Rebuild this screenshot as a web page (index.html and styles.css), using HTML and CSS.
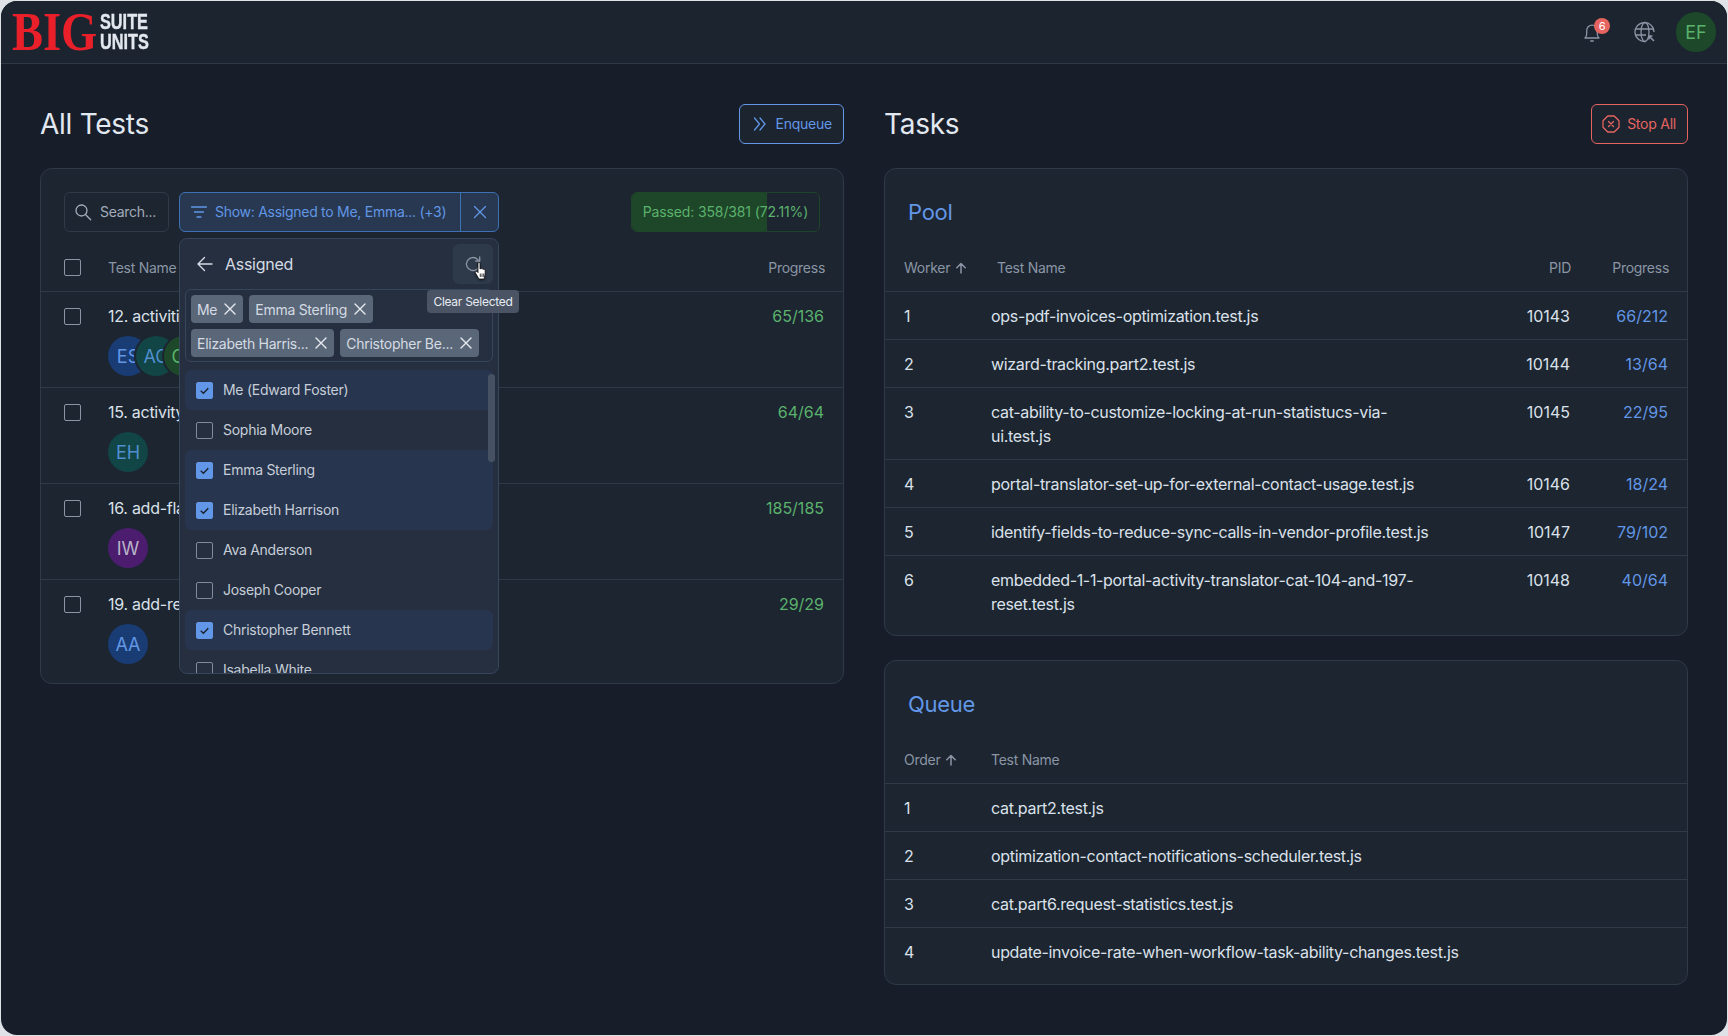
FILE: index.html
```html
<!DOCTYPE html>
<html lang="en">
<head>
<meta charset="utf-8">
<title>All Tests</title>
<link rel="stylesheet" href="styles.css">
</head>
<body>
<div class="app">
  <header class="topbar">
    <div class="logo"><span class="logo-big">BIG</span><span class="logo-small"><span>SUITE</span><span>UNITS</span></span></div>
    <div class="top-actions">
      <div class="bell">
        <svg width="20" height="20" viewBox="0 0 20 20" fill="none" stroke="#8b95a5" stroke-width="1.3" stroke-linecap="round" stroke-linejoin="round"><path d="M3 16h14c-1-.9-1.700-1.800-1.700-4V8.500a5.300 5.300 0 0 0-10.600 0V12c0 2.200-.7 3.100-1.700 4Z"/><path d="M8.700 19h2.600"/></svg>
        <span class="badge">6</span>
      </div>
      <svg class="globe" width="22" height="22" viewBox="0 0 22 22" fill="none" stroke="#8b95a5" stroke-width="1.300"><path d="M20 11a9.500 9.500 0 1 0-8 9.400"/><ellipse cx="11" cy="11" rx="4" ry="9.500"/><path d="M2 8h18M2 14h10"/><path d="M15 15l5 5M15 15v3.500M15 15h3.500" stroke-width="1.600"/></svg>
      <div class="avatar green me">EF</div>
    </div>
  </header>
  <main class="content">
    <section class="column">
      <div class="section-head">
        <h1>All Tests</h1>
        <button class="btn btn-blue"><svg width="16" height="16" viewBox="0 0 16 16" fill="none" stroke="currentColor" stroke-width="1.300" stroke-linecap="round" stroke-linejoin="round"><path d="M2.500 2l5 6-5 6M8 2l5 6-5 6"/></svg>Enqueue</button>
      </div>
      <div class="card tests-card">
        <div class="toolbar">
          <div class="search"><svg width="18" height="18" viewBox="0 0 18 18" fill="none" stroke="#a3acba" stroke-width="1.300" stroke-linecap="round"><circle cx="7.500" cy="7.500" r="5.500"/><path d="M11.700 11.700l5 5"/></svg>Search...</div>
          <div class="filter">
            <div class="filter-main"><svg width="18" height="18" viewBox="0 0 18 18" fill="none" stroke="currentColor" stroke-width="1.300" stroke-linecap="round"><path d="M1.500 4h15M4.500 9h9M7 14h4"/></svg>Show: Assigned to Me, Emma... (+3)</div>
            <div class="filter-clear"><svg width="14" height="14" viewBox="0 0 14 14" fill="none" stroke="currentColor" stroke-width="1.300" stroke-linecap="round"><path d="M1.500 1.500l11 11M12.500 1.500l-11 11"/></svg></div>
          </div>
          <div class="passed"><div class="passed-fill"></div><span>Passed: 358/381 (72.11%)</span></div>
        </div>
        <div class="tr thead">
          <span class="cb"></span><span class="t-name">Test Name</span><span class="t-progress">Progress</span>
        </div>
        <div class="tr test-row">
          <span class="cb"></span>
          <div class="t-name"><div class="t-title">12. activities-report.test.js</div><div class="avatars"><span class="avatar blue">ES</span><span class="avatar teal">AC</span><span class="avatar green">CB</span></div></div>
          <span class="t-progress ok">65/136</span>
        </div>
        <div class="tr test-row">
          <span class="cb"></span>
          <div class="t-name"><div class="t-title">15. activity-log.test.js</div><div class="avatars"><span class="avatar teal">EH</span></div></div>
          <span class="t-progress ok">64/64</span>
        </div>
        <div class="tr test-row">
          <span class="cb"></span>
          <div class="t-name"><div class="t-title">16. add-flags.test.js</div><div class="avatars"><span class="avatar purple">IW</span></div></div>
          <span class="t-progress ok">185/185</span>
        </div>
        <div class="tr test-row end">
          <span class="cb"></span>
          <div class="t-name"><div class="t-title">19. add-records.test.js</div><div class="avatars"><span class="avatar blue">AA</span></div></div>
          <span class="t-progress ok">29/29</span>
        </div>
        <div class="dropdown">
          <div class="dd-head">
            <svg width="18" height="18" viewBox="0 0 18 18" fill="none" stroke="#d5dbe4" stroke-width="1.400" stroke-linecap="round" stroke-linejoin="round"><path d="M16 9H2M8.500 2.500L2 9l6.500 6.500"/></svg>
            <span class="dd-title">Assigned</span>
            <div class="dd-reset">
              <svg width="18" height="18" viewBox="0 0 18 18" fill="none" stroke="#8b95a5" stroke-width="1.300" stroke-linecap="round" stroke-linejoin="round"><path d="M15.500 9a6.500 6.500 0 1 1-1.900-4.600L15.500 6"/><path d="M15.700 2v4h-4"/></svg>
              <svg class="hand" width="14" height="18" viewBox="0 0 14 18"><path d="M4 1.500c0-1.300 2-1.300 2 0V7l.5-.3c.5-.4 1.300-.2 1.500.3.500-.3 1.300-.2 1.500.4.600-.3 1.400-.1 1.600.6.100 2 .2 4.500-.3 6l-.8 3H5l-3.500-6C.8 9.800 2 8.800 3 9.600l1 1V1.500Z" fill="#fff" stroke="#111" stroke-width=".8"/><path d="M6.300 11.500v3.500M8 11.500v3.500M9.700 11.500v3.500" stroke="#111" stroke-width=".8"/></svg>
            </div>
          </div>
          <div class="chips">
            <span class="chip">Me<svg class="x" viewBox="0 0 12 12"><path d="M1 1l10 10M11 1L1 11"/></svg></span>
            <span class="chip">Emma Sterling<svg class="x" viewBox="0 0 12 12"><path d="M1 1l10 10M11 1L1 11"/></svg></span>
            <span class="chip">Elizabeth Harris...<svg class="x" viewBox="0 0 12 12"><path d="M1 1l10 10M11 1L1 11"/></svg></span>
            <span class="chip">Christopher Be...<svg class="x" viewBox="0 0 12 12"><path d="M1 1l10 10M11 1L1 11"/></svg></span>
          </div>
          <div class="dd-list">
            <div class="opt on first last"><span class="cb checked"><svg viewBox="0 0 18 18"><path d="M5 9.300l2.800 2.700L13 6.500"/></svg></span>Me (Edward Foster)</div>
            <div class="opt"><span class="cb"></span>Sophia Moore</div>
            <div class="opt on first"><span class="cb checked"><svg viewBox="0 0 18 18"><path d="M5 9.300l2.800 2.700L13 6.500"/></svg></span>Emma Sterling</div>
            <div class="opt on last"><span class="cb checked"><svg viewBox="0 0 18 18"><path d="M5 9.300l2.800 2.700L13 6.500"/></svg></span>Elizabeth Harrison</div>
            <div class="opt"><span class="cb"></span>Ava Anderson</div>
            <div class="opt"><span class="cb"></span>Joseph Cooper</div>
            <div class="opt on first last"><span class="cb checked"><svg viewBox="0 0 18 18"><path d="M5 9.300l2.800 2.700L13 6.500"/></svg></span>Christopher Bennett</div>
            <div class="opt"><span class="cb"></span>Isabella White</div>
          </div>
          <div class="scrollbar"></div>
        </div>
        <div class="tooltip">Clear Selected</div>
      </div>
    </section>
    <section class="column">
      <div class="section-head">
        <h1>Tasks</h1>
        <button class="btn btn-red"><svg width="18" height="18" viewBox="0 0 18 18" fill="none" stroke="currentColor" stroke-width="1.300" stroke-linecap="round" stroke-linejoin="round"><path d="M5.800 1h6.400L17 5.800v6.400L12.200 17H5.800L1 12.200V5.800Z"/><path d="M6.500 6.500l5 5M11.500 6.500l-5 5"/></svg>Stop All</button>
      </div>
      <div class="card side-card">
        <h2>Pool</h2>
        <div class="tr q-head">
          <span class="c-idx">Worker <svg class="arrow" viewBox="0 0 12 12"><path d="M6 11V1.500M1.800 5.700L6 1.500l4.200 4.200"/></svg></span><span class="c-test pool-name-head">Test Name</span><span class="c-pid">PID</span><span class="c-prog">Progress</span>
        </div>
        <div class="tr q-row"><span class="c-idx">1</span><span class="c-test">ops-pdf-invoices-optimization.test.js</span><span class="c-pid">10143</span><span class="c-prog link">66/212</span></div>
        <div class="tr q-row"><span class="c-idx">2</span><span class="c-test">wizard-tracking.part2.test.js</span><span class="c-pid">10144</span><span class="c-prog link">13/64</span></div>
        <div class="tr q-row"><span class="c-idx">3</span><span class="c-test">cat-ability-to-customize-locking-at-run-statistucs-via-ui.test.js</span><span class="c-pid">10145</span><span class="c-prog link">22/95</span></div>
        <div class="tr q-row"><span class="c-idx">4</span><span class="c-test">portal-translator-set-up-for-external-contact-usage.test.js</span><span class="c-pid">10146</span><span class="c-prog link">18/24</span></div>
        <div class="tr q-row"><span class="c-idx">5</span><span class="c-test">identify-fields-to-reduce-sync-calls-in-vendor-profile.test.js</span><span class="c-pid">10147</span><span class="c-prog link">79/102</span></div>
        <div class="tr q-row"><span class="c-idx">6</span><span class="c-test">embedded-1-1-portal-activity-translator-cat-104-and-197-reset.test.js</span><span class="c-pid">10148</span><span class="c-prog link">40/64</span></div>
      </div>
      <div class="card side-card">
        <h2>Queue</h2>
        <div class="tr q-head">
          <span class="c-idx">Order <svg class="arrow" viewBox="0 0 12 12"><path d="M6 11V1.500M1.800 5.700L6 1.500l4.200 4.200"/></svg></span><span class="c-test">Test Name</span>
        </div>
        <div class="tr q-row"><span class="c-idx">1</span><span class="c-test wide">cat.part2.test.js</span></div>
        <div class="tr q-row"><span class="c-idx">2</span><span class="c-test wide">optimization-contact-notifications-scheduler.test.js</span></div>
        <div class="tr q-row"><span class="c-idx">3</span><span class="c-test wide">cat.part6.request-statistics.test.js</span></div>
        <div class="tr q-row"><span class="c-idx">4</span><span class="c-test wide">update-invoice-rate-when-workflow-task-ability-changes.test.js</span></div>
      </div>
    </section>
  </main>
</div>
</body>
</html>
```

FILE: styles.css
```css
* { box-sizing: border-box; }
html, body { height: 100%; }
body {
  margin: 0;
  background: #dfe2e7;
  padding: 1px;
  font-family: Inter, "Noto Sans", sans-serif;
  font-size: 16px;
  letter-spacing: -0.017em;
  color: #dbe1ea;
}
.app {
  height: 100%;
  background: #171e2a;
  border-radius: 16px;
  overflow: hidden;
}
.topbar {
  height: 63px;
  background: #1c2430;
  border-bottom: 1px solid #2f3945;
  display: flex;
  align-items: center;
  justify-content: space-between;
  padding: 0 11px;
}
.logo { display: flex; align-items: center; gap: 3px; }
.logo-big {
  width: 85px;
  font-family: "Liberation Serif", serif;
  font-weight: 700;
  font-size: 54px;
  line-height: 38px;
  letter-spacing: 0;
  color: #e9202a;
  transform: scaleX(0.86);
  transform-origin: left center;
}
.logo-small {
  display: flex;
  flex-direction: column;
  font-family: "Liberation Sans", sans-serif;
  font-weight: 700;
  font-size: 22px;
  line-height: 20px;
  letter-spacing: 0;
  color: #e3e7ee;
  -webkit-text-stroke: 0.4px #e3e7ee;
  transform: scaleX(0.74);
  transform-origin: left center;
}
.top-actions { display: flex; align-items: center; }
.bell { position: relative; width: 20px; height: 20px; margin-right: 32px; }
.bell svg { display: block; }
.badge {
  position: absolute;
  top: -4px;
  left: 12px;
  width: 16px;
  height: 16px;
  border-radius: 50%;
  background: #e5645f;
  color: #fff;
  font-size: 11px;
  line-height: 16px;
  text-align: center;
}
.globe { margin-right: 20px; }
.avatar {
  width: 40px;
  height: 40px;
  border-radius: 50%;
  display: flex;
  align-items: center;
  justify-content: center;
  font-size: 18px;
  letter-spacing: 0;
  flex: none;
}
.avatar.me { background: #1d4829; color: #5bb26d; }
.green { background: #1d4829; color: #5bb26d; }
.blue { background: #193c74; color: #6297e6; }
.teal { background: #124545; color: #4f8fd0; }
.purple { background: #4c1d6e; color: #b9b4c8; }

.content {
  display: flex;
  gap: 40px;
  padding: 40px 39px 0;
}
.column { flex: 1; min-width: 0; display: flex; flex-direction: column; }
.section-head {
  height: 40px;
  margin-bottom: 24px;
  display: flex;
  align-items: center;
  justify-content: space-between;
}
h1 {
  margin: 0;
  font-size: 28px;
  font-weight: 400;
  color: #e2e8f0;
}
.btn {
  height: 40px;
  display: flex;
  align-items: center;
  gap: 8px;
  padding: 0 11px 0 12px;
  background: #1c2430;
  border-radius: 6px;
  font: 14px/18px Inter, sans-serif;
  letter-spacing: -0.017em;
}
.btn-blue { border: 1px solid #6296e6; color: #6296e6; }
.btn-red { border: 1px solid #e5645f; color: #e5645f; gap: 7px; padding-left: 10px; }
.card {
  position: relative;
  background: #1c2530;
  border: 1px solid #2f3a48;
  border-radius: 12px;
}
.tests-card { height: 516px; }
.toolbar {
  height: 75px;
  padding: 23px 23px 0;
  display: flex;
  align-items: flex-start;
}
.search {
  width: 105px;
  height: 40px;
  border: 1px solid #2f3a48;
  border-radius: 6px;
  display: flex;
  align-items: center;
  gap: 8px;
  padding-left: 9px;
  font-size: 14px;
  line-height: 18px;
  color: #a3acba;
  margin-right: 10px;
  white-space: nowrap;
}
.filter {
  width: 320px;
  height: 40px;
  display: flex;
  background: #273850;
  border: 1px solid #3f70b4;
  border-radius: 6px;
  color: #6296e6;
  font-size: 14px;
  line-height: 18px;
  white-space: nowrap;
}
.filter-main {
  flex: 1;
  display: flex;
  align-items: center;
  gap: 7px;
  padding-left: 10px;
  border-right: 1px solid #3f70b4;
}
.filter-clear {
  width: 37px;
  display: flex;
  align-items: center;
  justify-content: center;
}
.passed {
  position: relative;
  margin-left: auto;
  width: 189px;
  height: 40px;
  border: 1px solid #1f4429;
  border-radius: 6px;
  overflow: hidden;
  display: flex;
  align-items: center;
  justify-content: center;
  font-size: 14px;
  line-height: 18px;
  letter-spacing: -0.01em;
  color: #5bb26d;
  white-space: nowrap;
}
.passed span { position: relative; }
.passed-fill {
  position: absolute;
  left: 0;
  top: 0;
  bottom: 0;
  width: 72.110%;
  background: #1e4629;
}
.tr {
  display: flex;
  border-bottom: 1px solid #2f3a48;
}
.tr:last-child, .tr.end { border-bottom: 0; }
.cb {
  width: 17px;
  height: 17px;
  border: 1.500px solid #8b95a5;
  border-radius: 2px;
  flex: none;
}
.thead {
  height: 48px;
  padding: 8px 18px 0 23px;
  align-items: flex-start;
  font-size: 14px;
  color: #8b95a5;
}
.thead .cb { margin-top: 7px; }
.thead .t-name, .thead .t-progress { margin-top: 7px; line-height: 17px; }
.t-name { margin-left: 27px; flex: 1; min-width: 0; }
.test-row {
  height: 96px;
  padding: 13px 19px 0 23px;
  align-items: flex-start;
}
.test-row.end { height: 103px; }
.test-row .cb { margin-top: 3px; }
.t-title { line-height: 22px; white-space: nowrap; }
.avatars { display: flex; margin-top: 9px; }
.avatars .avatar + .avatar { margin-left: -12px; box-shadow: 0 0 0 2px #1c2530; }
.t-progress { flex: none; }
.ok { color: #5bb26d; line-height: 22px; letter-spacing: 0; }

.dropdown {
  position: absolute;
  z-index: 2;
  left: 138px;
  top: 69px;
  width: 320px;
  height: 436px;
  background: #252f3f;
  border: 1px solid #37465a;
  border-radius: 8px;
  overflow: hidden;
  display: flex;
  flex-direction: column;
}
.dd-head {
  flex: none;
  height: 50px;
  display: flex;
  align-items: center;
  padding: 0 5px 0 16px;
}
.dd-title { margin-left: 11px; font-size: 16px; color: #d5dbe4; flex: 1; }
.dd-reset {
  position: relative;
  width: 40px;
  height: 40px;
  background: #2e3a4a;
  border-radius: 6px;
  display: flex;
  align-items: center;
  justify-content: center;
}
.hand { position: absolute; left: 21px; top: 18px; filter: drop-shadow(0 1px 1px rgba(0, 0, 0, .5)); }
.chips {
  flex: none;
  margin: 0 5px;
  height: 73px;
  border: 1px solid #37465a;
  border-radius: 6px;
  padding: 5px;
  display: flex;
  flex-wrap: wrap;
  gap: 6px;
  align-content: flex-start;
}
.chip {
  height: 28px;
  display: flex;
  align-items: center;
  gap: 7px;
  padding: 0 7px 0 6px;
  background: #5a6778;
  border-radius: 4px;
  font-size: 14px;
  color: #d5dbe4;
  white-space: nowrap;
}
.x {
  width: 12px;
  height: 12px;
  fill: none;
  stroke: #e6eaf0;
  stroke-width: 1.400;
  stroke-linecap: round;
}
.dd-list { margin: 8px 5px 0; flex: 1; overflow: hidden; }
.opt {
  height: 40px;
  display: flex;
  align-items: center;
  gap: 10px;
  padding-left: 11px;
  font-size: 14px;
  line-height: 18px;
  color: #c6ced9;
  white-space: nowrap;
}
.opt .cb { border-color: #7f8a9a; }
.opt.on { background: #28354e; color: #c6ced9; }
.opt.first { border-top-left-radius: 6px; border-top-right-radius: 6px; }
.opt.last { border-bottom-left-radius: 6px; border-bottom-right-radius: 6px; }
.cb.checked {
  background: #6296e6;
  border-color: #6296e6;
  display: flex;
  align-items: center;
  justify-content: center;
}
.cb.checked svg {
  width: 17px;
  height: 17px;
  flex: none;
  fill: none;
  stroke: #1c2530;
  stroke-width: 1.500;
}
.scrollbar {
  position: absolute;
  left: 308px;
  top: 135px;
  width: 7px;
  height: 88px;
  background: #465264;
  border-radius: 4px;
}
.tooltip {
  position: absolute;
  z-index: 3;
  left: 386px;
  top: 121px;
  width: 92px;
  height: 23px;
  background: #4a5464;
  border-radius: 4px;
  font-size: 12px;
  line-height: 23px;
  text-align: center;
  color: #e8ecf2;
  white-space: nowrap;
}

.side-card { padding-bottom: 8px; margin-bottom: 24px; }
.side-card h2 {
  margin: 0;
  height: 75px;
  padding: 28px 0 0 23px;
  font-size: 22px;
  line-height: 30px;
  font-weight: 400;
  color: #6296e6;
}
.q-head {
  height: 48px;
  padding: 0 18px 0 19px;
  align-items: center;
  font-size: 14px;
  color: #8b95a5;
}
.q-row {
  padding: 12px 19px 11px 19px;
  line-height: 24px;
  min-height: 48px;
}
.c-idx { width: 87px; flex: none; white-space: nowrap; }
.q-head .c-idx { display: flex; align-items: center; gap: 5px; }
.c-test { flex: none; width: 450px; }
.q-row .c-test { letter-spacing: -0.02em; }
.c-test.wide { width: auto; flex: 1; }
.q-head .pool-name-head { margin-left: 6px; width: 400px; }
.c-pid { margin-left: auto; text-align: right; }
.q-row .c-pid, .q-row .c-prog { letter-spacing: 0; }
.c-prog { width: 98px; text-align: right; flex: none; }
.link { color: #6296e6; }
.arrow {
  width: 12px;
  height: 12px;
  fill: none;
  stroke: #8b95a5;
  stroke-width: 1.500;
  stroke-linecap: round;
  stroke-linejoin: round;
}
```
